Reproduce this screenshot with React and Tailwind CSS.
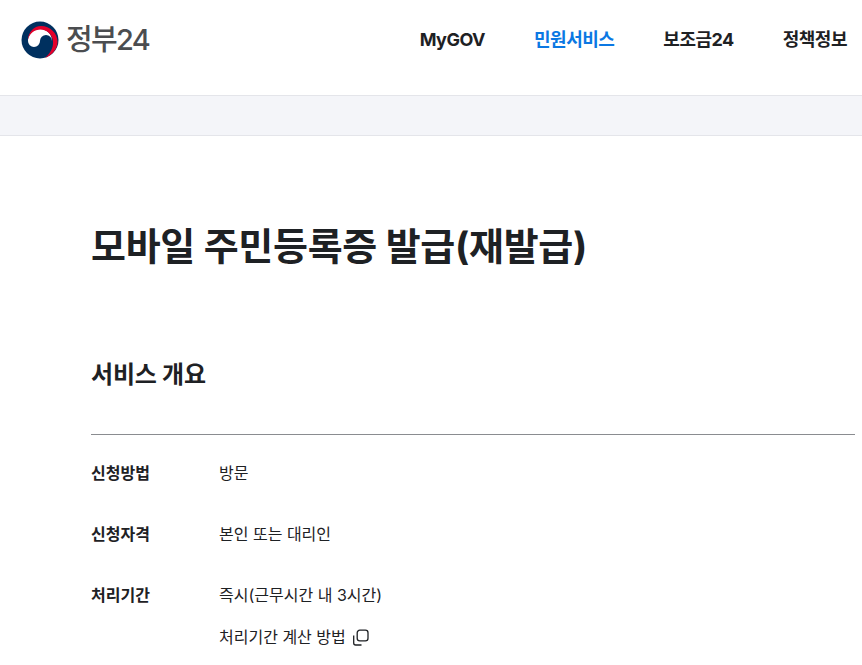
const font = { fontFamily: '"Inter", "Noto Sans CJK KR", sans-serif' };

function Logo() {
  return (
    <svg width="38" height="38" viewBox="0 0 38 38" className="shrink-0">
      <circle cx="19" cy="19" r="18.5" fill="#00305f" />
      <path d="M7 20 A12 12 0 0 1 31 20 A6 6 0 0 0 19 20 A6 6 0 0 1 7 20 Z" fill="#ffffff" />
      <path d="M6.8 19 C7.5 11 13 5 20 5 C29 5 36.5 12 36.5 21 C36.5 28 31 34 24 37 C29 32.5 32.5 27 32 20.5 C31.5 13.5 26 8.5 19.5 8.5 C13.5 8.5 8.5 12.5 6.8 19 Z" fill="#e4002b" />
    </svg>
  );
}

function Row({ label, children }) {
  return (
    <div className="flex">
      <div className="w-[128px] shrink-0 text-[16px] leading-[22px] font-bold text-[#1e2124]">{label}</div>
      <div className="text-[16px] leading-[22px] text-[#1e2124]">{children}</div>
    </div>
  );
}

export default function App() {
  return (
    <div className="w-[862px] h-[665px] overflow-hidden bg-white" style={font}>
      <header className="h-[95px] flex items-center pl-[21px]">
        <div className="flex items-center gap-[7px] pb-[16px]">
          <Logo />
          <span className="text-[29px] leading-[36px] font-medium text-[#4b4d50] tracking-[-1.7px]">정부24</span>
        </div>
        <nav className="ml-auto mr-[15px] flex gap-[49px] pb-[16px] text-[18px] leading-[26px] font-bold text-[#1e2124] tracking-[-0.5px]">
          <span>MyGOV</span>
          <span className="text-[#0b78e3]">민원서비스</span>
          <span>보조금24</span>
          <span>정책정보</span>
        </nav>
      </header>
      <div className="h-[41px] bg-[#f4f5f9] border-y border-[#e4e5ea]" />
      <main className="pl-[91px] pr-[7px]">
        <h1 className="mt-[85px] text-[38px] leading-[50px] font-bold text-[#1e2124] tracking-[-0.3px]">모바일 주민등록증 발급(재발급)</h1>
        <h2 className="mt-[88px] text-[24px] leading-[32px] font-bold text-[#1e2124] tracking-[-0.2px]">서비스 개요</h2>
        <div className="mt-[43px] border-t border-[#8a8c90] pt-[27px] flex flex-col gap-[39px]">
          <Row label="신청방법">방문</Row>
          <Row label="신청자격">본인 또는 대리인</Row>
          <Row label="처리기간">
            <div>즉시(근무시간 내 3시간)</div>
            <div className="mt-[20px] flex items-center gap-[6px]">
              처리기간 계산 방법
              <svg width="17" height="17" viewBox="0 0 17 17" fill="none" stroke="#1e2124" strokeWidth="1.3">
                <rect x="5.2" y="1.2" width="10.8" height="10.6" rx="2.6" />
                <path d="M1.7 6.5 V14 A2 2 0 0 0 3.7 16 H9.5" />
              </svg>
            </div>
          </Row>
        </div>
      </main>
    </div>
  );
}
